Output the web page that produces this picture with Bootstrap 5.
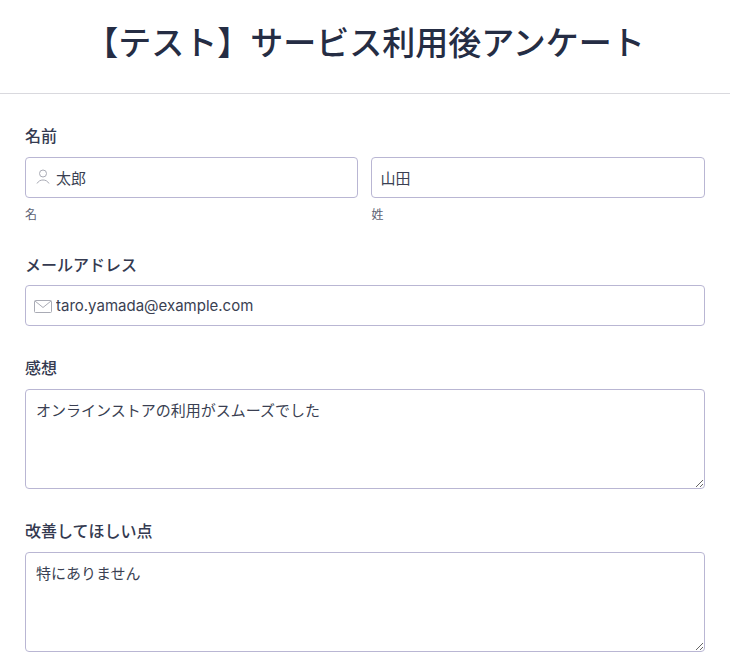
<!DOCTYPE html>
<html lang="ja">
  <head>
    <meta charset="UTF-8" />
    <meta name="viewport" content="width=device-width, initial-scale=1.0" />
    <link
      href="https://cdn.jsdelivr.net/npm/bootstrap@5.3.0/dist/css/bootstrap.min.css"
      rel="stylesheet"
    />
    <title>アンケート</title>
    <style>
      body {
        background-color: #fff;
        color: #2c3147;
        font-family: Inter, "Noto Sans CJK JP", sans-serif;
        overflow: hidden;
      }

      .survey-header {
        height: 94px;
        padding-bottom: 6px;
        border-bottom: 1px solid #d9d9de;
      }

      .survey-header h1 {
        font-size: 33px;
        font-weight: 500;
        line-height: 1.2;
        color: #252d44;
      }

      .survey-body {
        padding: 31px 25px 0;
      }

      .field-label {
        display: block;
        font-size: 16px;
        font-weight: 500;
        line-height: 22px;
        margin-bottom: 10px;
        color: #343a50;
      }

      .survey-input {
        height: 41px;
        font-size: 15px;
        line-height: 22px;
        color: #3a3f52;
        border-color: #b9b6d3;
        border-radius: 4px;
        padding: 0 10px;
      }

      .survey-input.with-icon {
        padding-left: 30px;
      }

      .survey-input.plain {
        padding-left: 8px;
      }

      textarea.survey-input {
        height: 100px;
        padding: 10px;
        display: block;
      }

      .input-wrap {
        position: relative;
      }

      .input-icon {
        position: absolute;
        left: 8px;
        top: 12px;
        width: 20px;
        height: 18px;
      }

      .field-hint {
        font-size: 12px;
        line-height: 16px;
        margin-top: 9px;
        color: #5d6274;
      }

      .name-row {
        gap: 13.4px;
      }

      .name-first {
        flex: 0 0 333px;
      }

      .name-group {
        margin-bottom: 31px;
      }

      .mail-group,
      .text-group {
        margin-bottom: 31px;
      }

      .mail-group .field-label {
        margin-bottom: 9px;
      }
    </style>
  </head>

  <body>
    <header class="survey-header d-flex align-items-center justify-content-center">
      <h1 class="m-0">【テスト】サービス利用後アンケート</h1>
    </header>

    <main class="survey-body">
      <form>
        <div class="name-group">
          <label class="field-label" for="first-name">名前</label>
          <div class="d-flex name-row">
            <div class="name-first">
              <div class="input-wrap">
                <svg class="input-icon" viewBox="0 0 20 18" fill="none" stroke="#a9abb5" stroke-width="1">
                  <circle cx="10" cy="4.500" r="3.500" />
                  <path d="M4 14.500c1.500-2.500 3.500-3.500 6-3.500s4.500 1 6 3.500" />
                </svg>
                <input id="first-name" class="form-control survey-input with-icon" type="text" value="太郎" />
              </div>
              <div class="field-hint">名</div>
            </div>
            <div class="flex-fill">
              <input id="last-name" class="form-control survey-input plain" type="text" value="山田" />
              <div class="field-hint">姓</div>
            </div>
          </div>
        </div>

        <div class="mail-group">
          <label class="field-label" for="email">メールアドレス</label>
          <div class="input-wrap">
            <svg class="input-icon" viewBox="0 0 20 18" fill="none" stroke="#a9abb5" stroke-width="1">
              <rect x="1.500" y="3.500" width="17" height="12" rx="1" />
              <path d="M2 4l8 6.500L18 4" />
            </svg>
            <input id="email" class="form-control survey-input with-icon" type="email" value="taro.yamada@example.com" />
          </div>
        </div>

        <div class="text-group">
          <label class="field-label" for="impression">感想</label>
          <textarea id="impression" class="form-control survey-input">オンラインストアの利用がスムーズでした</textarea>
        </div>

        <div class="text-group">
          <label class="field-label" for="improve">改善してほしい点</label>
          <textarea id="improve" class="form-control survey-input">特にありません</textarea>
        </div>
      </form>
    </main>

    <script src="https://cdn.jsdelivr.net/npm/bootstrap@5.3.0/dist/js/bootstrap.bundle.min.js"></script>
  </body>
</html>
